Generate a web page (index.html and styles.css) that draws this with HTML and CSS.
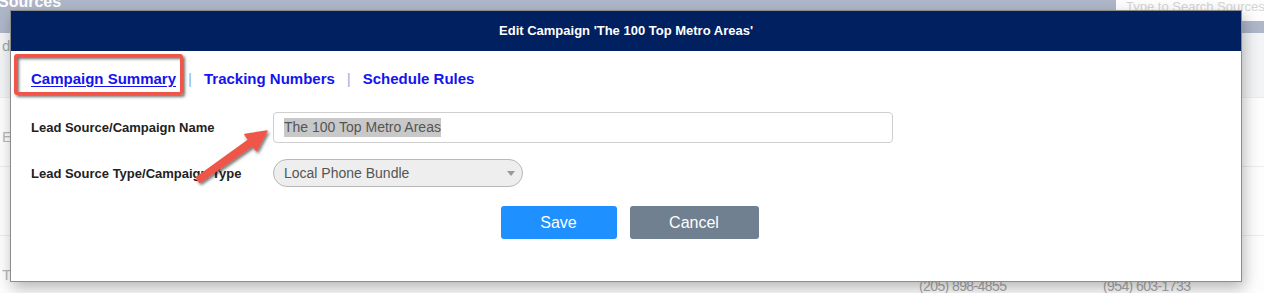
FILE: index.html
```html
<!DOCTYPE html>
<html>
<head>
<meta charset="utf-8">
<link rel="stylesheet" href="styles.css">
</head>
<body>
<div class="page">
  <div class="topbar">
    <span class="topbar-title">Sources</span>
    <div class="search">Type to Search Sources</div>
  </div>
  <div class="row row-head"><span class="cell-l">d</span></div>
  <div class="row"><span class="cell-l">E</span></div>
  <div class="row"></div>
  <div class="row row-last">
    <span class="cell-l">T</span>
    <span class="phone p1">(205) 898-4855</span>
    <span class="phone p2">(954) 603-1733</span>
  </div>
</div>

<div class="dialog">
  <div class="dialog-header">Edit Campaign 'The 100 Top Metro Areas'</div>
  <div class="dialog-body">
    <div class="tabs">
      <a class="tab tab-active">Campaign Summary</a>
      <span class="sep">|</span>
      <a class="tab">Tracking Numbers</a>
      <span class="sep">|</span>
      <a class="tab">Schedule Rules</a>
      <div class="highlight"></div>
    </div>
    <div class="form-row row-name">
      <label class="label">Lead Source/Campaign Name</label>
      <div class="input"><span class="sel">The 100 Top Metro Areas</span></div>
    </div>
    <div class="form-row row-type">
      <label class="label">Lead Source Type/Campaign Type</label>
      <div class="select">Local Phone Bundle<span class="caret"></span></div>
    </div>
    <div class="buttons">
      <button class="btn btn-save">Save</button>
      <button class="btn btn-cancel">Cancel</button>
    </div>
  </div>
</div>

<svg class="arrow" viewBox="0 0 1264 293" width="1264" height="293">
  <defs>
    <filter id="sh" x="-20%" y="-20%" width="140%" height="140%">
      <feDropShadow dx="1.5" dy="2" stdDeviation="1.5" flood-color="#000" flood-opacity="0.55"/>
    </filter>
  </defs>
  <polygon filter="url(#sh)" fill="#ef5548" stroke="#ef5548" stroke-width="1.5" stroke-linejoin="round"
    points="196.3,177.6 248.7,139.8 244.9,134.5 267,131 256.5,150.7 252.7,145.4 199.7,182.4"/>
</svg>
</body>
</html>
```

FILE: styles.css
```css
* { box-sizing: border-box; }
html, body { margin: 0; padding: 0; }
body {
  width: 1264px;
  height: 293px;
  overflow: hidden;
  position: relative;
  background: #fdfdfd;
  font-family: "Liberation Sans", Arial, sans-serif;
}

/* background page */
.page { width: 1264px; }
.topbar {
  height: 33px;
  background: #aeb6c9;
  display: flex;
  justify-content: space-between;
  align-items: flex-start;
}
.topbar-title {
  color: #fff;
  font-weight: bold;
  font-size: 16px;
  line-height: 16px;
  margin-top: -6px;
  margin-left: -2px;
}
.search {
  width: 148px;
  height: 21px;
  background: #fdfdfd;
  color: #d4d4d4;
  font-size: 13px;
  line-height: 14px;
  padding: 0 0 0 10px;
  white-space: nowrap;
  overflow: hidden;
}
.row {
  height: 69px;
  border-bottom: 1px solid #ececec;
  position: relative;
  color: #b8b8b8;
  font-size: 15px;
}
.row-head { height: 65px; background: #f3f4f6; }
.cell-l { position: absolute; left: 2px; top: 30px; }
.row-head .cell-l { top: 4px; color: #9aa; }
.row-last .cell-l { top: 30px; }
.phone {
  position: absolute;
  top: 42px;
  font-size: 14px;
  letter-spacing: -0.6px;
  color: #a8a8a8;
}
.p1 { left: 919px; }
.p2 { left: 1103px; }

/* dialog */
.dialog {
  position: absolute;
  left: 10px;
  top: 10px;
  width: 1232px;
  height: 272px;
  background: #fff;
  border: 1px solid #8c8c8c;
  box-shadow: 2px 6px 14px rgba(0, 0, 0, 0.28);
}
.dialog-header {
  height: 40px;
  background: #002060;
  color: #fff;
  font-weight: bold;
  font-size: 13px;
  line-height: 40px;
  text-align: center;
}
.dialog-body { padding: 0 20px; }
.tabs {
  position: relative;
  margin-top: 18px;
  height: 19px;
  line-height: 19px;
  display: flex;
  align-items: center;
  font-size: 15px;
  font-weight: bold;
}
.tab { color: #1414ee; text-decoration: none; }
.tab-active { text-decoration: underline; text-underline-offset: 2px; }
.sep {
  color: #8fb2e6;
  font-weight: normal;
  margin: 0 12px 0 12px;
}
.highlight {
  position: absolute;
  left: -17px;
  top: -15px;
  width: 169px;
  height: 41px;
  border: 3px solid #ef5548;
  border-radius: 3px;
  box-shadow: 2px 2px 3px rgba(0, 0, 0, 0.55), inset 2px 2px 3px rgba(0, 0, 0, 0.55);
}
.form-row {
  display: flex;
  align-items: center;
}
.row-name { margin-top: 24px; }
.row-type { margin-top: 16px; }
.label {
  width: 242px;
  flex: none;
  font-size: 13px;
  font-weight: bold;
  color: #222;
}
.input {
  width: 620px;
  height: 31px;
  border: 1px solid #cfcfcf;
  border-radius: 4px;
  padding-left: 10px;
  display: flex;
  align-items: center;
  font-size: 14px;
  color: #555;
}
.sel { background: #c8c8c8; line-height: 19px; }
.select {
  position: relative;
  width: 250px;
  height: 28px;
  border: 1px solid #b8b8b8;
  border-radius: 14px;
  background: #eeeeee;
  padding-left: 10px;
  display: flex;
  align-items: center;
  font-size: 14px;
  color: #555;
}
.caret {
  position: absolute;
  right: 7px;
  top: 11px;
  width: 0;
  height: 0;
  border-left: 4px solid transparent;
  border-right: 4px solid transparent;
  border-top: 5px solid #999;
}
.buttons {
  display: flex;
  justify-content: center;
  gap: 13px;
  margin-top: 19px;
  padding-left: 7px;
}
.btn {
  height: 33px;
  border: none;
  border-radius: 3px;
  color: #fff;
  font-family: "Liberation Sans", Arial, sans-serif;
  font-size: 16px;
  padding: 0;
}
.btn-save { width: 116px; background: #1e90ff; }
.btn-cancel { width: 129px; background: #708090; }

.arrow {
  position: absolute;
  left: 0;
  top: 0;
  pointer-events: none;
}
```
